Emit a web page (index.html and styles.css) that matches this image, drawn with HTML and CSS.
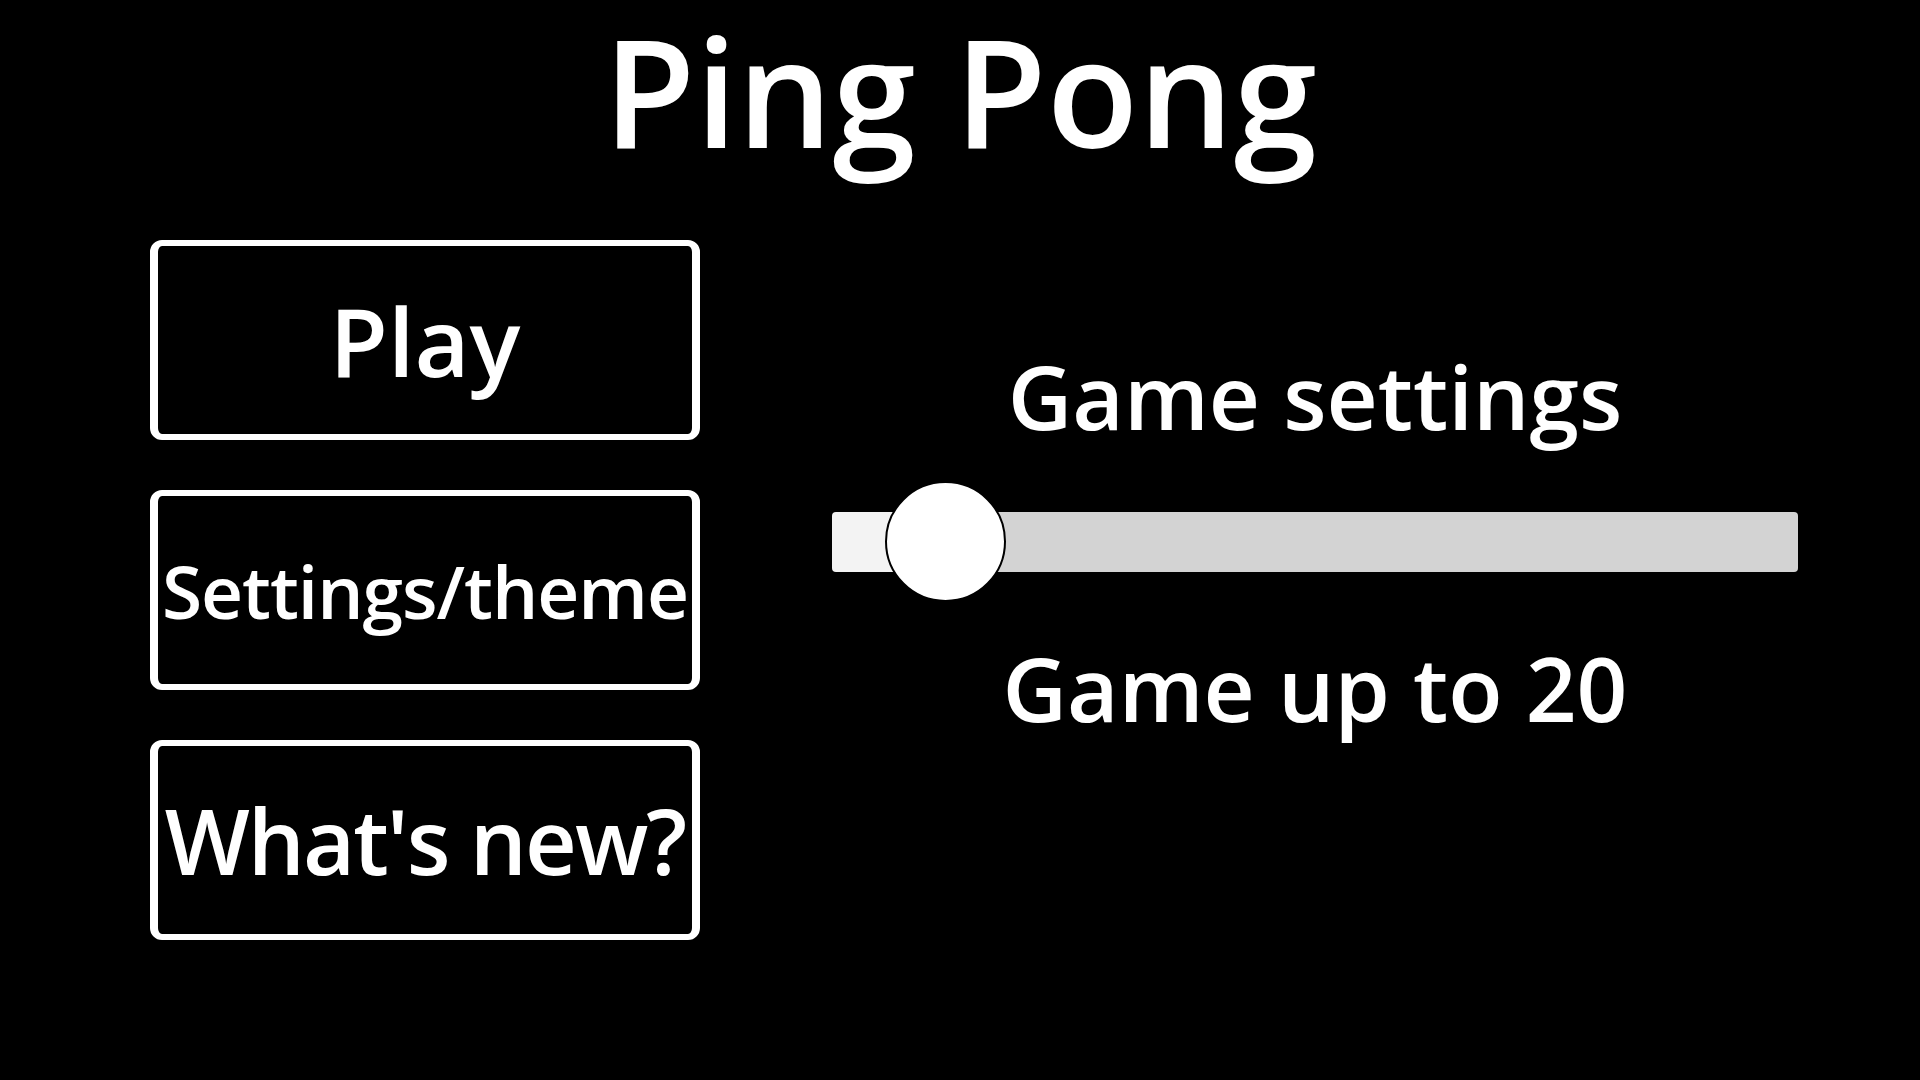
FILE: index.html
```html
<!DOCTYPE html>
<html lang="en">
<head>
    <meta charset="UTF-8">
    <meta name="viewport" content="width=device-width, initial-scale=1.0">
    <title>Ping Pong</title>
    <link rel="stylesheet" href="styles.css">
</head>
<body>
    <h1 class="title">Ping Pong</h1>
    <main class="menu">
        <div class="menu-buttons">
            <button class="menu-btn btn-play">Play</button>
            <button class="menu-btn btn-settings">Settings/theme</button>
            <button class="menu-btn btn-news">What's new?</button>
        </div>
        <div class="game-settings">
            <p class="settings-title">Game settings</p>
            <input type="range" id="points" class="slider" min="10" max="170" value="20">
            <p class="settings-label">Game up to <span id="points-value">20</span></p>
        </div>
    </main>
    <script>
        let slider = document.getElementById('points');
        let pointsValue = document.getElementById('points-value');

        function updateSlider() {
            let min = Number(slider.min);
            let max = Number(slider.max);
            let frac = (slider.value - min) / (max - min);
            let width = slider.offsetWidth;
            let thumb = slider.offsetHeight;
            // filled part runs up to the middle of the thumb
            let fill = (thumb / 2 + frac * (width - thumb)) / width * 100;
            slider.style.setProperty('--fill', fill + '%');
            pointsValue.textContent = slider.value;
        }

        slider.addEventListener('input', updateSlider);
        updateSlider();
    </script>
</body>
</html>
```

FILE: styles.css
```css
body {
    margin: 0;
    padding: 0;
    background: #000;
    color: #fff;
    font-family: "Open Sans", "Noto Sans", sans-serif;
}

.title {
    margin: 0;
    padding-bottom: 14px;
    text-align: center;
    font-size: 150px;
    font-weight: 600;
    line-height: 1.2;
}

.menu {
    display: flex;
    align-items: flex-start;
    padding: 46px 0 0 150px;
}

.menu-buttons {
    display: flex;
    flex-direction: column;
    gap: 50px;
    width: 550px;
}

.menu-btn {
    box-sizing: border-box;
    width: 550px;
    height: 200px;
    padding: 0;
    background: #000;
    color: #fff;
    border: solid #fff;
    border-width: 6px 8px;
    border-radius: 12px;
    font-family: "Open Sans", "Noto Sans", sans-serif;
    font-weight: 600;
    white-space: nowrap;
    overflow: hidden;
    cursor: pointer;
}
.btn-play {
    font-size: 95px;
}
.btn-settings {
    font-size: 73px;
    letter-spacing: -1px;
}
.btn-news {
    font-size: 90px;
    letter-spacing: -2px;
}

.game-settings {
    display: flex;
    flex-direction: column;
    align-items: center;
    width: 966px;
    margin: 110px 0 0 132px;
}
.settings-title,
.settings-label {
    margin: 0;
    font-size: 89px;
    font-weight: 600;
    line-height: 92px;
}
.settings-title {
    margin-bottom: 39px;
}
.settings-label {
    margin-top: 40px;
}

.slider {
    -webkit-appearance: none;
    appearance: none;
    --fill: 11.7%;
    width: 966px;
    height: 121px;
    margin: 0;
    background: transparent;
    cursor: pointer;
}
.slider::-webkit-slider-runnable-track {
    height: 60px;
    border-radius: 4px;
    background: linear-gradient(to right, #f3f3f3 var(--fill), #d3d3d3 var(--fill));
}
.slider::-webkit-slider-thumb {
    -webkit-appearance: none;
    appearance: none;
    box-sizing: border-box;
    width: 121px;
    height: 121px;
    margin-top: -30.5px;
    border: 2px solid #000;
    border-radius: 50%;
    background: #fff;
}
```
